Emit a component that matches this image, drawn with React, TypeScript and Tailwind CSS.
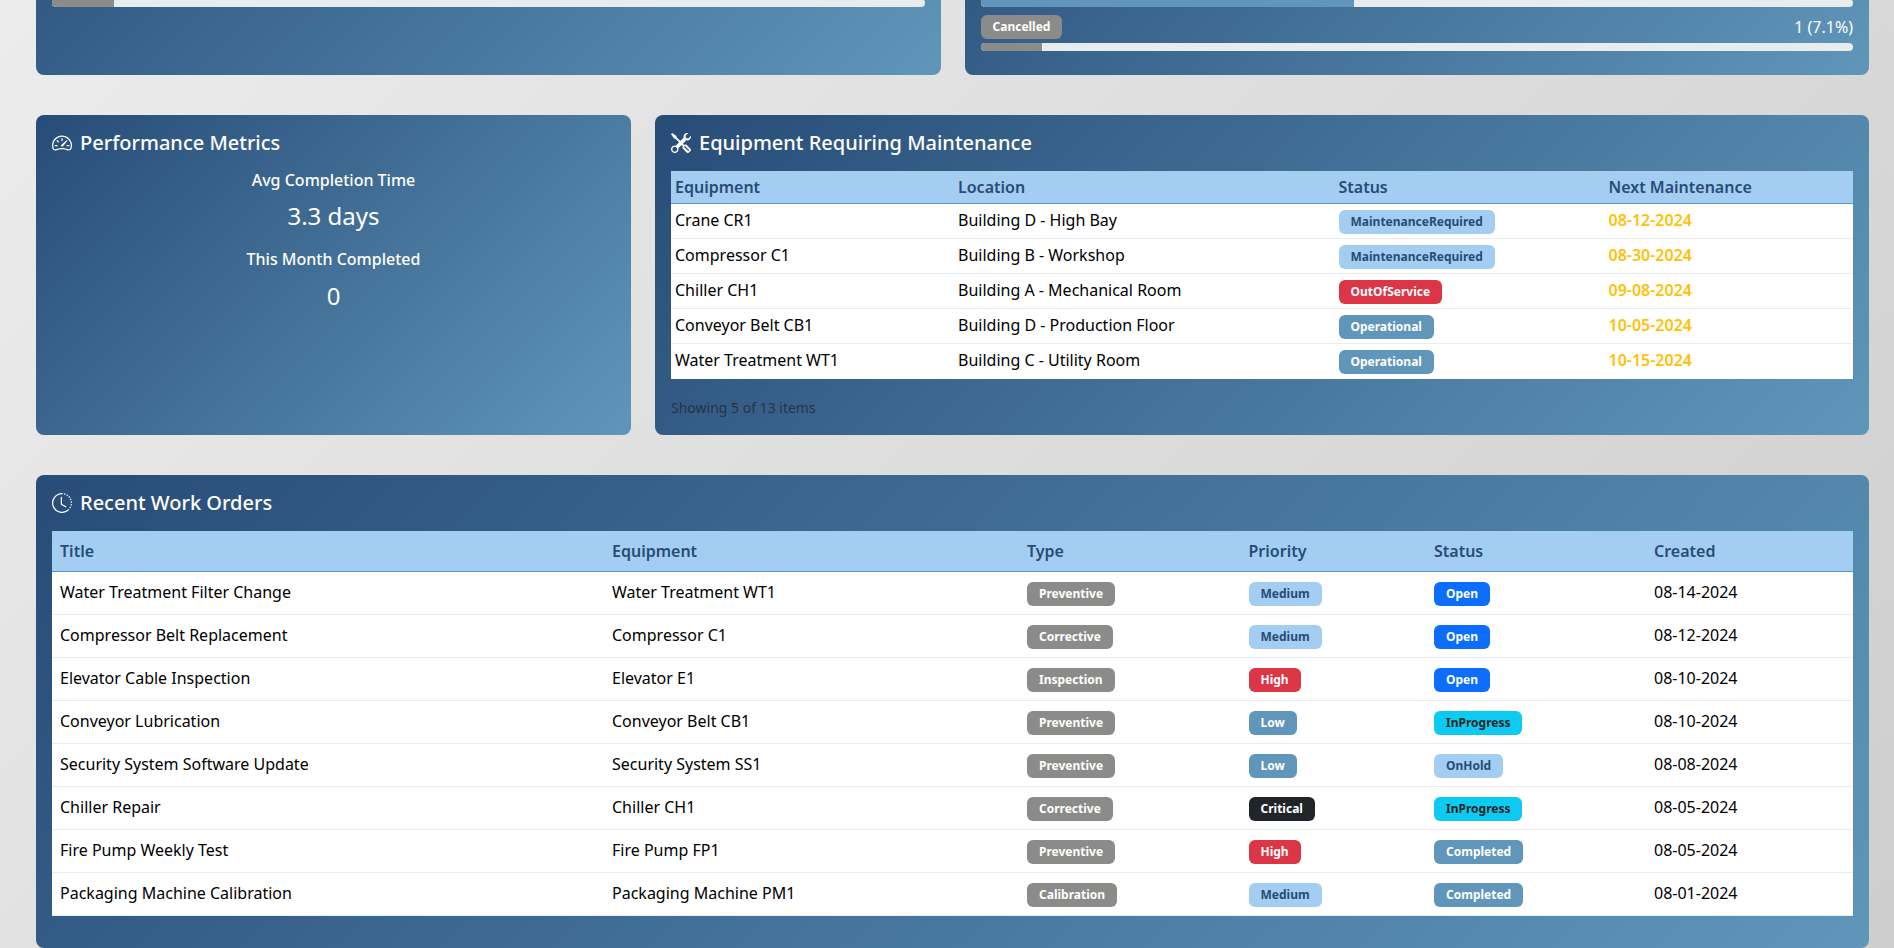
import type { ReactNode } from "react";
import { BsClockHistory, BsSpeedometer2, BsTools } from "react-icons/bs";

const GRADIENT = "rounded-lg bg-[linear-gradient(135deg,#274c77,#6096ba)] text-white";

const badgeTones: Record<string, string> = {
  gray: "bg-[#8b8c89] text-white",
  light: "bg-[#a3cef1] text-[#274c77]",
  steel: "bg-[#6096ba] text-white",
  red: "bg-[#dc3545] text-white",
  blue: "bg-[#0d6efd] text-white",
  cyan: "bg-[#0dcaf0] text-[#212529]",
  dark: "bg-[#212529] text-white",
};

const equipment = [
  ["Crane CR1", "Building D - High Bay", "MaintenanceRequired", "light", "08-12-2024"],
  ["Compressor C1", "Building B - Workshop", "MaintenanceRequired", "light", "08-30-2024"],
  ["Chiller CH1", "Building A - Mechanical Room", "OutOfService", "red", "09-08-2024"],
  ["Conveyor Belt CB1", "Building D - Production Floor", "Operational", "steel", "10-05-2024"],
  ["Water Treatment WT1", "Building C - Utility Room", "Operational", "steel", "10-15-2024"],
];

const workOrders = [
  ["Water Treatment Filter Change", "Water Treatment WT1", "Preventive", "Medium", "light", "Open", "blue", "08-14-2024"],
  ["Compressor Belt Replacement", "Compressor C1", "Corrective", "Medium", "light", "Open", "blue", "08-12-2024"],
  ["Elevator Cable Inspection", "Elevator E1", "Inspection", "High", "red", "Open", "blue", "08-10-2024"],
  ["Conveyor Lubrication", "Conveyor Belt CB1", "Preventive", "Low", "steel", "InProgress", "cyan", "08-10-2024"],
  ["Security System Software Update", "Security System SS1", "Preventive", "Low", "steel", "OnHold", "light", "08-08-2024"],
  ["Chiller Repair", "Chiller CH1", "Corrective", "Critical", "dark", "InProgress", "cyan", "08-05-2024"],
  ["Fire Pump Weekly Test", "Fire Pump FP1", "Preventive", "High", "red", "Completed", "steel", "08-05-2024"],
  ["Packaging Machine Calibration", "Packaging Machine PM1", "Calibration", "Medium", "light", "Completed", "steel", "08-01-2024"],
];

function Badge({ tone, children }: { tone: string; children: ReactNode }) {
  return (
    <span className={`inline-block h-6 rounded-md px-3 text-xs leading-6 font-bold ${badgeTones[tone]}`}>
      {children}
    </span>
  );
}

function Bar({ fill, color }: { fill: string; color: string }) {
  return (
    <div className="h-2 overflow-hidden rounded bg-[#e7ecef]">
      <div className={`h-full ${fill} ${color}`} />
    </div>
  );
}

function CardTitle({ icon, children }: { icon: ReactNode; children: ReactNode }) {
  return (
    <h5 className="flex h-6 items-center gap-2 text-xl leading-6 font-medium">
      {icon}
      {children}
    </h5>
  );
}

export default function App() {
  return (
    <div className="flex h-[948px] flex-col gap-10 overflow-hidden bg-[linear-gradient(135deg,#ececec,#cecece)] pr-[25px] pl-9 font-['Noto_Sans',sans-serif]">
      {/* top row is cut off by the scroll position */}
      <div className="-mt-[225px] flex flex-none gap-6">
        <div className={`flex h-[300px] flex-1 flex-col justify-end px-4 pb-[68px] ${GRADIENT}`}>
          <Bar fill="w-[7.1%]" color="bg-[#8b8c89]" />
        </div>
        <div className={`flex h-[300px] flex-1 flex-col justify-end px-4 pb-6 ${GRADIENT}`}>
          <Bar fill="w-[42.8%]" color="bg-[#6096ba]" />
          <div className="mt-2 mb-1 flex items-center justify-between">
            <Badge tone="gray">Cancelled</Badge>
            <span className="text-base">1 (7.1%)</span>
          </div>
          <Bar fill="w-[7.1%]" color="bg-[#8b8c89]" />
        </div>
      </div>

      <div className="flex h-80 flex-none gap-6">
        <div className={`w-[595px] flex-none p-4 ${GRADIENT}`}>
          <CardTitle icon={<BsSpeedometer2 size={20} />}>Performance Metrics</CardTitle>
          <div className="pt-4 text-center">
            <h6 className="text-base leading-[19px] font-medium">Avg Completion Time</h6>
            <div className="mt-[11px] mb-5 text-2xl leading-[29px]">3.3 days</div>
            <h6 className="text-base leading-[19px] font-medium">This Month Completed</h6>
            <div className="mt-3 text-2xl leading-[29px]">0</div>
          </div>
        </div>

        <div className={`min-w-0 flex-1 p-4 ${GRADIENT}`}>
          <CardTitle icon={<BsTools size={20} />}>Equipment Requiring Maintenance</CardTitle>
          <table className="mt-4 w-full table-fixed bg-white text-left text-base text-black">
            <thead className="bg-[#a3cef1] text-[#274c77]">
              <tr className="border-b border-[#6096ba]">
                <th className="w-[283px] px-1 py-1 font-semibold">Equipment</th>
                <th className="w-[380.5px] px-1 py-1 font-semibold">Location</th>
                <th className="w-[270px] px-1 py-1 font-semibold">Status</th>
                <th className="px-1 py-1 font-semibold">Next Maintenance</th>
              </tr>
            </thead>
            <tbody>
              {equipment.map(([name, location, status, tone, next]) => (
                <tr key={name} className="h-[35px] border-b border-[#e7ecef] last:border-b-0">
                  <td className="px-1 py-1 align-top">{name}</td>
                  <td className="px-1 py-1 align-top">{location}</td>
                  <td className="px-1 pt-[6px] pb-1 align-top leading-none">
                    <Badge tone={tone}>{status}</Badge>
                  </td>
                  <td className="px-1 py-1 align-top font-semibold text-[#ffc107]">{next}</td>
                </tr>
              ))}
            </tbody>
          </table>
          <p className="mt-[19px] text-sm text-[#212529]/75">Showing 5 of 13 items</p>
        </div>
      </div>

      <div className={`h-[473px] flex-none p-4 ${GRADIENT}`}>
        <CardTitle icon={<BsClockHistory size={20} />}>Recent Work Orders</CardTitle>
        <table className="mt-4 w-full table-fixed bg-white text-left text-base text-black">
          <thead className="bg-[#a3cef1] text-[#274c77]">
            <tr className="border-b border-[#6096ba]">
              <th className="w-[552px] px-2 py-2 font-semibold">Title</th>
              <th className="w-[415px] px-2 py-2 font-semibold">Equipment</th>
              <th className="w-[221.5px] px-2 py-2 font-semibold">Type</th>
              <th className="w-[185.5px] px-2 py-2 font-semibold">Priority</th>
              <th className="w-[220px] px-2 py-2 font-semibold">Status</th>
              <th className="px-2 py-2 font-semibold">Created</th>
            </tr>
          </thead>
          <tbody>
            {workOrders.map(([title, equip, type, priority, priorityTone, status, statusTone, created]) => (
              <tr key={title} className="h-[43px] border-b border-[#e7ecef]">
                <td className="px-2 py-2 align-top">{title}</td>
                <td className="px-2 py-2 align-top">{equip}</td>
                <td className="px-2 pt-[10px] pb-2 align-top leading-none">
                  <Badge tone="gray">{type}</Badge>
                </td>
                <td className="px-2 pt-[10px] pb-2 align-top leading-none">
                  <Badge tone={priorityTone}>{priority}</Badge>
                </td>
                <td className="px-2 pt-[10px] pb-2 align-top leading-none">
                  <Badge tone={statusTone}>{status}</Badge>
                </td>
                <td className="px-2 py-2 align-top">{created}</td>
              </tr>
            ))}
          </tbody>
        </table>
      </div>
    </div>
  );
}
